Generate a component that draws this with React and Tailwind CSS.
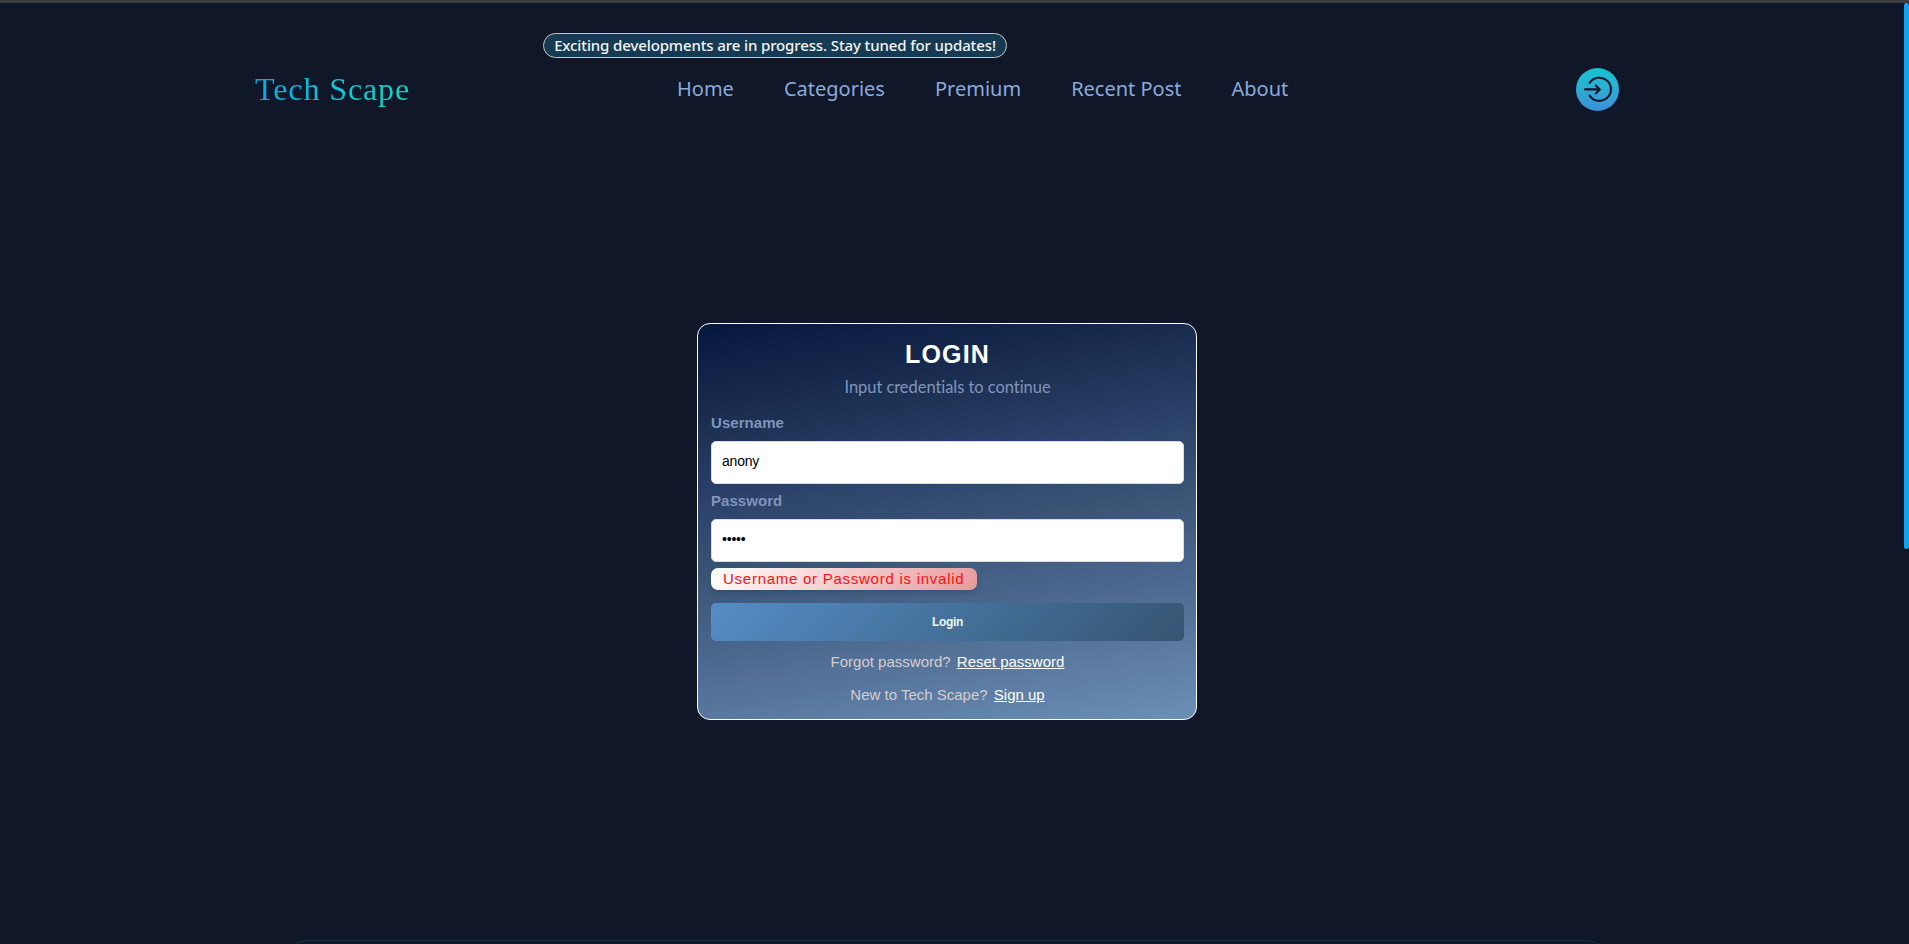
import { useState } from "react";

const links = ["Home", "Categories", "Premium", "Recent Post", "About"];

function LoginIcon() {
  return (
    <svg
      width="43"
      height="43"
      viewBox="0 0 43 43"
      fill="none"
      stroke="#0f172a"
      strokeWidth="2.1"
      strokeLinecap="round"
      strokeLinejoin="round"
    >
      <path d="M13.6 15A11.6 11.6 0 1 1 13.6 27.6" />
      <path d="M9 21.4H23.5M19.8 17.4L23.8 21.4L19.8 25.4" />
    </svg>
  );
}

function Header() {
  return (
    <header className="pt-[30px]">
      <div className="ml-[543px] flex h-[25px] w-[464px] items-center justify-center rounded-full border border-[#c9c5c0] bg-[#163a52] text-[15px] font-medium tracking-[-0.12px] whitespace-nowrap text-gray-100">
        Exciting developments are in progress. Stay tuned for updates!
      </div>
      <div className="mt-[10px] ml-[255px] flex h-[43px] w-[1364px] items-center">
        <div className="w-[422px] pb-[2px]">
          <span className="bg-linear-to-r from-[#0ea5e9] via-[#0bc9d8] to-[#10d3bd] bg-clip-text font-['Liberation_Serif',serif] text-[32px] tracking-[0.9px] text-transparent">
            Tech Scape
          </span>
        </div>
        <nav className="flex gap-[50px] pb-[2px] text-[20px] whitespace-nowrap text-[#8aaadb]">
          {links.map((link) => (
            <a key={link} href="#">
              {link}
            </a>
          ))}
        </nav>
        <button className="ml-auto size-[43px] rounded-full bg-linear-to-b from-[#0fc6cf] to-[#3b8fd6]">
          <LoginIcon />
        </button>
      </div>
    </header>
  );
}

function Field({ label, type, value, onChange }) {
  return (
    <label className="block h-[78px]">
      <span className="block h-[35px] pt-[5px] text-[15px] leading-[24px] font-bold tracking-[0.05px] text-[#7f95bb]">
        {label}
      </span>
      <input
        type={type}
        value={value}
        onChange={(e) => onChange(e.target.value)}
        className="block h-[43px] w-full rounded-[5px] border border-[#d9dde3] bg-white px-[10px] pb-[3px] text-[14px] tracking-[-0.2px] text-black outline-none"
      />
    </label>
  );
}

function LoginCard() {
  const [username, setUsername] = useState("anony");
  const [password, setPassword] = useState("12345");

  return (
    <form className="mt-[212px] ml-[697px] h-[397px] w-[500px] rounded-[13px] border border-white bg-[linear-gradient(170deg,#06173e_0%,#1c3052_22%,#2a4069_36%,#3b5677_54%,#4d688f_70%,#6b8fb5_100%)] pr-[12px] pl-[13px] font-['Liberation_Sans',sans-serif]">
      <h1 className="pt-[14px] text-center text-[25px] leading-[32px] font-bold tracking-[1.2px] text-white">
        LOGIN
      </h1>
      <p className="h-[36px] pt-[5px] text-center font-['Lato',sans-serif] text-[16.5px] leading-[24px] tracking-[-0.05px] text-[#7f95bb] [font-variant-ligatures:none]">
        Input credentials to continue
      </p>
      <Field label="Username" type="text" value={username} onChange={setUsername} />
      <Field label="Password" type="password" value={password} onChange={setPassword} />
      <div className="mt-[6px] h-[22px] w-[266px] rounded-[7px] bg-[linear-gradient(135deg,#ffffff,#e89a9c)] pl-[12px] text-[15px] leading-[22px] tracking-[0.74px] whitespace-nowrap text-[#ff1010] shadow-md">
        Username or Password is invalid
      </div>
      <button
        type="button"
        className="mt-[13px] block h-[38px] w-full rounded-[5px] bg-[linear-gradient(135deg,#558dc6,#44719b_50%,#365572)] text-[12px] font-bold tracking-[-0.3px] text-gray-100"
      >
        Login
      </button>
      <p className="mt-[9px] text-center text-[15px] leading-[24px] text-[#d6cccf]">
        Forgot password?{" "}
        <a href="#" className="ml-[2px] text-white underline">
          Reset password
        </a>
      </p>
      <p className="mt-[9px] text-center text-[15px] leading-[24px] text-[#d6cccf]">
        New to Tech Scape?{" "}
        <a href="#" className="ml-[2px] text-white underline">
          Sign up
        </a>
      </p>
    </form>
  );
}

export default function App() {
  return (
    <div className="h-[944px] overflow-hidden bg-[#101728] font-['Noto_Sans',sans-serif]">
      <div className="h-[3px] bg-[#3b3d3f]" />
      <div className="flex h-[941px] justify-between">
        <main className="h-[941px] w-[1904px] overflow-hidden">
          <Header />
          <LoginCard />
          <section className="mt-[220px] ml-[279px] h-[300px] w-[1336px] rounded-[30px] border border-[#1d2e42] bg-[#10182c]" />
        </main>
        <div className="h-[546px] w-[5px] rounded-full bg-[#12a5ef]" />
      </div>
    </div>
  );
}
